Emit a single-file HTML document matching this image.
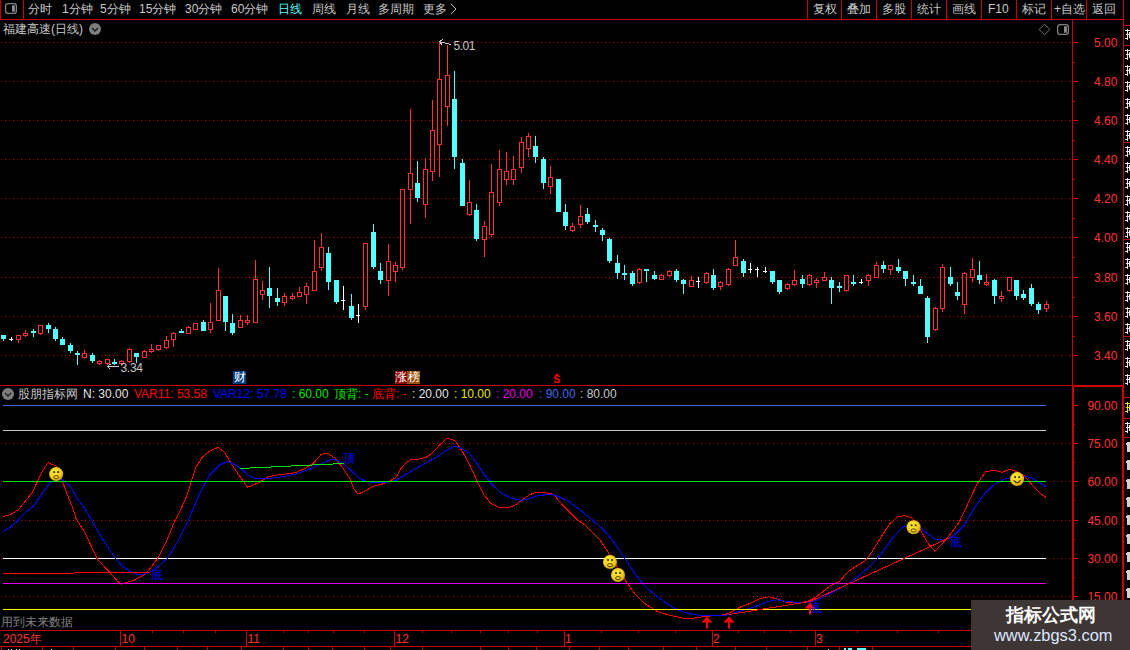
<!DOCTYPE html>
<html><head><meta charset="utf-8"><title>chart</title>
<style>
html,body{margin:0;padding:0;background:#000;}
body{width:1130px;height:650px;overflow:hidden;position:relative;font-family:"Liberation Sans",sans-serif;}
svg{position:absolute;left:0;top:0;}
.t{position:absolute;white-space:nowrap;line-height:14px;height:14px;font-size:12px;}
.m{position:absolute;width:12px;height:13px;line-height:13px;font-size:12px;color:#fff;text-align:center;overflow:hidden;}
#wm{position:absolute;left:971px;top:600px;width:159px;height:50px;background:#3e3535;overflow:hidden;}
#wm .w1{position:absolute;left:35px;top:3px;color:#fff;font-weight:bold;font-size:18px;line-height:24px;white-space:nowrap;}
#wm .w2{position:absolute;left:23px;top:25px;color:#dce6ff;font-size:16.4px;line-height:20px;white-space:nowrap;}
</style></head><body>
<svg width="1130" height="650" viewBox="0 0 1130 650" shape-rendering="crispEdges">
<defs><radialGradient id="sg" cx="0.4" cy="0.35" r="0.7"><stop offset="0" stop-color="#ffe83c"/><stop offset="0.6" stop-color="#f5cd1e"/><stop offset="1" stop-color="#c39614"/></radialGradient></defs>
<line x1="1" y1="42.5" x2="1072" y2="42.5" stroke="#c80000" stroke-width="1" stroke-dasharray="1 3"/>
<line x1="1" y1="81.5" x2="1072" y2="81.5" stroke="#c80000" stroke-width="1" stroke-dasharray="1 3"/>
<line x1="1" y1="120.5" x2="1072" y2="120.5" stroke="#c80000" stroke-width="1" stroke-dasharray="1 3"/>
<line x1="1" y1="159.5" x2="1072" y2="159.5" stroke="#c80000" stroke-width="1" stroke-dasharray="1 3"/>
<line x1="1" y1="198.5" x2="1072" y2="198.5" stroke="#c80000" stroke-width="1" stroke-dasharray="1 3"/>
<line x1="1" y1="237.5" x2="1072" y2="237.5" stroke="#c80000" stroke-width="1" stroke-dasharray="1 3"/>
<line x1="1" y1="277.5" x2="1072" y2="277.5" stroke="#c80000" stroke-width="1" stroke-dasharray="1 3"/>
<line x1="1" y1="316.5" x2="1072" y2="316.5" stroke="#c80000" stroke-width="1" stroke-dasharray="1 3"/>
<line x1="1" y1="355.5" x2="1072" y2="355.5" stroke="#c80000" stroke-width="1" stroke-dasharray="1 3"/>
<line x1="1" y1="443.5" x2="1072" y2="443.5" stroke="#c80000" stroke-width="1" stroke-dasharray="1 3"/>
<line x1="1" y1="481.5" x2="1072" y2="481.5" stroke="#c80000" stroke-width="1" stroke-dasharray="1 3"/>
<line x1="1" y1="520.5" x2="1072" y2="520.5" stroke="#c80000" stroke-width="1" stroke-dasharray="1 3"/>
<line x1="1" y1="558.5" x2="1072" y2="558.5" stroke="#c80000" stroke-width="1" stroke-dasharray="1 3"/>
<line x1="1" y1="596.5" x2="1072" y2="596.5" stroke="#c80000" stroke-width="1" stroke-dasharray="1 3"/>
<rect x="3" y="335" width="1" height="6" fill="#54ffff"/>
<rect x="1" y="335" width="5" height="4" fill="#54ffff"/>
<rect x="11" y="337" width="1" height="4" fill="#ffffff"/>
<rect x="9" y="339" width="4" height="1" fill="#ffffff"/>
<rect x="18" y="340" width="1" height="3" fill="#ff3232"/>
<rect x="16.5" y="335.5" width="4" height="4" fill="none" stroke="#ff3232" stroke-width="1"/>
<rect x="25" y="330" width="1" height="3" fill="#ff3232"/>
<rect x="25" y="336" width="1" height="1" fill="#ff3232"/>
<rect x="23.5" y="333.5" width="4" height="2" fill="none" stroke="#ff3232" stroke-width="1"/>
<rect x="33" y="329" width="1" height="8" fill="#54ffff"/>
<rect x="31" y="331" width="5" height="2" fill="#54ffff"/>
<rect x="40" y="334" width="1" height="1" fill="#ff3232"/>
<rect x="38.5" y="325.5" width="4" height="8" fill="none" stroke="#ff3232" stroke-width="1"/>
<rect x="48" y="323" width="1" height="10" fill="#54ffff"/>
<rect x="46" y="325" width="5" height="4" fill="#54ffff"/>
<rect x="55" y="327" width="1" height="14" fill="#54ffff"/>
<rect x="53" y="329" width="5" height="10" fill="#54ffff"/>
<rect x="62" y="337" width="1" height="8" fill="#54ffff"/>
<rect x="60" y="339" width="5" height="6" fill="#54ffff"/>
<rect x="70" y="343" width="1" height="10" fill="#54ffff"/>
<rect x="68" y="345" width="5" height="6" fill="#54ffff"/>
<rect x="77" y="351" width="1" height="14" fill="#54ffff"/>
<rect x="75" y="353" width="5" height="2" fill="#54ffff"/>
<rect x="84" y="350" width="1" height="3" fill="#ff3232"/>
<rect x="84" y="358" width="1" height="1" fill="#ff3232"/>
<rect x="82.5" y="353.5" width="4" height="4" fill="none" stroke="#ff3232" stroke-width="1"/>
<rect x="92" y="353" width="1" height="10" fill="#54ffff"/>
<rect x="90" y="355" width="5" height="6" fill="#54ffff"/>
<rect x="99" y="360" width="1" height="1" fill="#ff3232"/>
<rect x="99" y="364" width="1" height="1" fill="#ff3232"/>
<rect x="97.5" y="361.5" width="4" height="2" fill="none" stroke="#ff3232" stroke-width="1"/>
<rect x="107" y="364" width="1" height="1" fill="#ff3232"/>
<rect x="105.5" y="359.5" width="4" height="4" fill="none" stroke="#ff3232" stroke-width="1"/>
<rect x="114" y="359" width="1" height="6" fill="#54ffff"/>
<rect x="112" y="362" width="5" height="2" fill="#54ffff"/>
<rect x="121" y="360" width="1" height="1" fill="#ff3232"/>
<rect x="121" y="363" width="1" height="2" fill="#ff3232"/>
<rect x="119.5" y="361.5" width="4" height="2" fill="none" stroke="#ff3232" stroke-width="1"/>
<rect x="129" y="348" width="1" height="1" fill="#ff3232"/>
<rect x="129" y="362" width="1" height="1" fill="#ff3232"/>
<rect x="127.5" y="349.5" width="4" height="12" fill="none" stroke="#ff3232" stroke-width="1"/>
<rect x="136" y="353" width="1" height="10" fill="#54ffff"/>
<rect x="134" y="353" width="5" height="4" fill="#54ffff"/>
<rect x="144" y="350" width="1" height="1" fill="#ff3232"/>
<rect x="142.5" y="351.5" width="4" height="6" fill="none" stroke="#ff3232" stroke-width="1"/>
<rect x="151" y="344" width="1" height="5" fill="#ff3232"/>
<rect x="151" y="352" width="1" height="1" fill="#ff3232"/>
<rect x="149.5" y="349.5" width="4" height="2" fill="none" stroke="#ff3232" stroke-width="1"/>
<rect x="158" y="350" width="1" height="1" fill="#ff3232"/>
<rect x="156.5" y="345.5" width="4" height="4" fill="none" stroke="#ff3232" stroke-width="1"/>
<rect x="166" y="336" width="1" height="4" fill="#ff3232"/>
<rect x="166" y="348" width="1" height="1" fill="#ff3232"/>
<rect x="164.5" y="340.5" width="4" height="7" fill="none" stroke="#ff3232" stroke-width="1"/>
<rect x="173" y="332" width="1" height="1" fill="#ff3232"/>
<rect x="173" y="340" width="1" height="7" fill="#ff3232"/>
<rect x="171.5" y="333.5" width="4" height="6" fill="none" stroke="#ff3232" stroke-width="1"/>
<rect x="181" y="329" width="1" height="4" fill="#54ffff"/>
<rect x="179" y="331" width="5" height="2" fill="#54ffff"/>
<rect x="188" y="326" width="1" height="1" fill="#ff3232"/>
<rect x="186.5" y="327.5" width="4" height="6" fill="none" stroke="#ff3232" stroke-width="1"/>
<rect x="193.5" y="323.5" width="4" height="6" fill="none" stroke="#ff3232" stroke-width="1"/>
<rect x="203" y="320" width="1" height="11" fill="#54ffff"/>
<rect x="201" y="322" width="5" height="9" fill="#54ffff"/>
<rect x="210" y="303" width="1" height="19" fill="#ff3232"/>
<rect x="210" y="330" width="1" height="3" fill="#ff3232"/>
<rect x="208.5" y="322.5" width="4" height="7" fill="none" stroke="#ff3232" stroke-width="1"/>
<rect x="218" y="268" width="1" height="22" fill="#ff3232"/>
<rect x="216.5" y="290.5" width="4" height="30" fill="none" stroke="#ff3232" stroke-width="1"/>
<rect x="225" y="296" width="1" height="35" fill="#54ffff"/>
<rect x="223" y="296" width="5" height="26" fill="#54ffff"/>
<rect x="232" y="314" width="1" height="21" fill="#54ffff"/>
<rect x="230" y="323" width="5" height="10" fill="#54ffff"/>
<rect x="240" y="315" width="1" height="5" fill="#ff3232"/>
<rect x="238.5" y="320.5" width="4" height="7" fill="none" stroke="#ff3232" stroke-width="1"/>
<rect x="247" y="315" width="1" height="5" fill="#ff3232"/>
<rect x="247" y="323" width="1" height="2" fill="#ff3232"/>
<rect x="245.5" y="320.5" width="4" height="2" fill="none" stroke="#ff3232" stroke-width="1"/>
<rect x="255" y="260" width="1" height="19" fill="#ff3232"/>
<rect x="253.5" y="279.5" width="4" height="43" fill="none" stroke="#ff3232" stroke-width="1"/>
<rect x="262" y="281" width="1" height="9" fill="#ff3232"/>
<rect x="262" y="295" width="1" height="5" fill="#ff3232"/>
<rect x="260.5" y="290.5" width="4" height="4" fill="none" stroke="#ff3232" stroke-width="1"/>
<rect x="269" y="267" width="1" height="41" fill="#54ffff"/>
<rect x="267" y="288" width="5" height="8" fill="#54ffff"/>
<rect x="277" y="288" width="1" height="18" fill="#54ffff"/>
<rect x="275" y="298" width="5" height="4" fill="#54ffff"/>
<rect x="284" y="293" width="1" height="3" fill="#ff3232"/>
<rect x="284" y="303" width="1" height="3" fill="#ff3232"/>
<rect x="282.5" y="296.5" width="4" height="6" fill="none" stroke="#ff3232" stroke-width="1"/>
<rect x="292" y="293" width="1" height="3" fill="#ff3232"/>
<rect x="292" y="299" width="1" height="1" fill="#ff3232"/>
<rect x="290.5" y="296.5" width="4" height="2" fill="none" stroke="#ff3232" stroke-width="1"/>
<rect x="299" y="287" width="1" height="5" fill="#ff3232"/>
<rect x="297.5" y="292.5" width="4" height="4" fill="none" stroke="#ff3232" stroke-width="1"/>
<rect x="306" y="283" width="1" height="3" fill="#ff3232"/>
<rect x="306" y="295" width="1" height="9" fill="#ff3232"/>
<rect x="304.5" y="286.5" width="4" height="8" fill="none" stroke="#ff3232" stroke-width="1"/>
<rect x="314" y="240" width="1" height="31" fill="#ff3232"/>
<rect x="312.5" y="271.5" width="4" height="19" fill="none" stroke="#ff3232" stroke-width="1"/>
<rect x="321" y="233" width="1" height="14" fill="#ff3232"/>
<rect x="321" y="268" width="1" height="3" fill="#ff3232"/>
<rect x="319.5" y="247.5" width="4" height="20" fill="none" stroke="#ff3232" stroke-width="1"/>
<rect x="328" y="247" width="1" height="43" fill="#54ffff"/>
<rect x="326" y="253" width="5" height="29" fill="#54ffff"/>
<rect x="336" y="280" width="1" height="24" fill="#54ffff"/>
<rect x="334" y="280" width="5" height="22" fill="#54ffff"/>
<rect x="343" y="286" width="1" height="24" fill="#ffffff"/>
<rect x="341" y="300" width="4" height="1" fill="#ffffff"/>
<rect x="351" y="294" width="1" height="26" fill="#54ffff"/>
<rect x="349" y="306" width="5" height="12" fill="#54ffff"/>
<rect x="358" y="304" width="1" height="19" fill="#ffffff"/>
<rect x="356" y="315" width="4" height="1" fill="#ffffff"/>
<rect x="365" y="307" width="1" height="3" fill="#ff3232"/>
<rect x="363.5" y="243.5" width="4" height="63" fill="none" stroke="#ff3232" stroke-width="1"/>
<rect x="373" y="224" width="1" height="45" fill="#54ffff"/>
<rect x="371" y="232" width="5" height="35" fill="#54ffff"/>
<rect x="380" y="263" width="1" height="21" fill="#54ffff"/>
<rect x="378" y="271" width="5" height="9" fill="#54ffff"/>
<rect x="388" y="244" width="1" height="17" fill="#ff3232"/>
<rect x="388" y="281" width="1" height="15" fill="#ff3232"/>
<rect x="386.5" y="261.5" width="4" height="19" fill="none" stroke="#ff3232" stroke-width="1"/>
<rect x="395" y="262" width="1" height="3" fill="#ff3232"/>
<rect x="395" y="272" width="1" height="10" fill="#ff3232"/>
<rect x="393.5" y="265.5" width="4" height="6" fill="none" stroke="#ff3232" stroke-width="1"/>
<rect x="402" y="268" width="1" height="2" fill="#ff3232"/>
<rect x="400.5" y="189.5" width="4" height="78" fill="none" stroke="#ff3232" stroke-width="1"/>
<rect x="410" y="109" width="1" height="64" fill="#ff3232"/>
<rect x="410" y="190" width="1" height="34" fill="#ff3232"/>
<rect x="408.5" y="173.5" width="4" height="16" fill="none" stroke="#ff3232" stroke-width="1"/>
<rect x="417" y="161" width="1" height="41" fill="#54ffff"/>
<rect x="415" y="183" width="5" height="15" fill="#54ffff"/>
<rect x="425" y="158" width="1" height="11" fill="#ff3232"/>
<rect x="425" y="205" width="1" height="13" fill="#ff3232"/>
<rect x="423.5" y="169.5" width="4" height="35" fill="none" stroke="#ff3232" stroke-width="1"/>
<rect x="432" y="100" width="1" height="30" fill="#ff3232"/>
<rect x="432" y="172" width="1" height="9" fill="#ff3232"/>
<rect x="430.5" y="130.5" width="4" height="41" fill="none" stroke="#ff3232" stroke-width="1"/>
<rect x="439" y="42" width="1" height="37" fill="#ff3232"/>
<rect x="439" y="145" width="1" height="32" fill="#ff3232"/>
<rect x="437.5" y="79.5" width="4" height="65" fill="none" stroke="#ff3232" stroke-width="1"/>
<rect x="447" y="45" width="1" height="30" fill="#ff3232"/>
<rect x="447" y="107" width="1" height="19" fill="#ff3232"/>
<rect x="445.5" y="75.5" width="4" height="31" fill="none" stroke="#ff3232" stroke-width="1"/>
<rect x="454" y="71" width="1" height="98" fill="#54ffff"/>
<rect x="452" y="99" width="5" height="58" fill="#54ffff"/>
<rect x="462" y="159" width="1" height="47" fill="#54ffff"/>
<rect x="460" y="163" width="5" height="43" fill="#54ffff"/>
<rect x="469" y="180" width="1" height="22" fill="#ff3232"/>
<rect x="469" y="215" width="1" height="1" fill="#ff3232"/>
<rect x="467.5" y="202.5" width="4" height="12" fill="none" stroke="#ff3232" stroke-width="1"/>
<rect x="476" y="204" width="1" height="37" fill="#54ffff"/>
<rect x="474" y="210" width="5" height="29" fill="#54ffff"/>
<rect x="484" y="221" width="1" height="5" fill="#ff3232"/>
<rect x="484" y="240" width="1" height="17" fill="#ff3232"/>
<rect x="482.5" y="226.5" width="4" height="13" fill="none" stroke="#ff3232" stroke-width="1"/>
<rect x="491" y="164" width="1" height="28" fill="#ff3232"/>
<rect x="491" y="235" width="1" height="2" fill="#ff3232"/>
<rect x="489.5" y="192.5" width="4" height="42" fill="none" stroke="#ff3232" stroke-width="1"/>
<rect x="499" y="150" width="1" height="19" fill="#ff3232"/>
<rect x="499" y="203" width="1" height="3" fill="#ff3232"/>
<rect x="497.5" y="169.5" width="4" height="33" fill="none" stroke="#ff3232" stroke-width="1"/>
<rect x="506" y="152" width="1" height="19" fill="#ff3232"/>
<rect x="506" y="180" width="1" height="5" fill="#ff3232"/>
<rect x="504.5" y="171.5" width="4" height="8" fill="none" stroke="#ff3232" stroke-width="1"/>
<rect x="513" y="156" width="1" height="13" fill="#ff3232"/>
<rect x="513" y="180" width="1" height="5" fill="#ff3232"/>
<rect x="511.5" y="169.5" width="4" height="10" fill="none" stroke="#ff3232" stroke-width="1"/>
<rect x="521" y="137" width="1" height="5" fill="#ff3232"/>
<rect x="521" y="168" width="1" height="5" fill="#ff3232"/>
<rect x="519.5" y="142.5" width="4" height="25" fill="none" stroke="#ff3232" stroke-width="1"/>
<rect x="528" y="133" width="1" height="3" fill="#ff3232"/>
<rect x="528" y="149" width="1" height="8" fill="#ff3232"/>
<rect x="526.5" y="136.5" width="4" height="12" fill="none" stroke="#ff3232" stroke-width="1"/>
<rect x="535" y="136" width="1" height="27" fill="#54ffff"/>
<rect x="533" y="146" width="5" height="11" fill="#54ffff"/>
<rect x="543" y="157" width="1" height="32" fill="#54ffff"/>
<rect x="541" y="159" width="5" height="24" fill="#54ffff"/>
<rect x="550" y="166" width="1" height="11" fill="#ff3232"/>
<rect x="550" y="187" width="1" height="7" fill="#ff3232"/>
<rect x="548.5" y="177.5" width="4" height="9" fill="none" stroke="#ff3232" stroke-width="1"/>
<rect x="558" y="179" width="1" height="33" fill="#54ffff"/>
<rect x="556" y="179" width="5" height="33" fill="#54ffff"/>
<rect x="565" y="204" width="1" height="26" fill="#54ffff"/>
<rect x="563" y="212" width="5" height="14" fill="#54ffff"/>
<rect x="572" y="223" width="1" height="3" fill="#ff3232"/>
<rect x="572" y="231" width="1" height="1" fill="#ff3232"/>
<rect x="570.5" y="226.5" width="4" height="4" fill="none" stroke="#ff3232" stroke-width="1"/>
<rect x="580" y="205" width="1" height="11" fill="#ff3232"/>
<rect x="580" y="225" width="1" height="3" fill="#ff3232"/>
<rect x="578.5" y="216.5" width="4" height="8" fill="none" stroke="#ff3232" stroke-width="1"/>
<rect x="587" y="208" width="1" height="16" fill="#54ffff"/>
<rect x="585" y="214" width="5" height="8" fill="#54ffff"/>
<rect x="595" y="220" width="1" height="12" fill="#54ffff"/>
<rect x="593" y="225" width="5" height="2" fill="#54ffff"/>
<rect x="602" y="228" width="1" height="13" fill="#54ffff"/>
<rect x="600" y="230" width="5" height="5" fill="#54ffff"/>
<rect x="609" y="238" width="1" height="25" fill="#54ffff"/>
<rect x="607" y="239" width="5" height="22" fill="#54ffff"/>
<rect x="617" y="255" width="1" height="24" fill="#54ffff"/>
<rect x="615" y="263" width="5" height="10" fill="#54ffff"/>
<rect x="624" y="265" width="1" height="15" fill="#54ffff"/>
<rect x="622" y="273" width="5" height="2" fill="#54ffff"/>
<rect x="632" y="271" width="1" height="15" fill="#54ffff"/>
<rect x="630" y="273" width="5" height="11" fill="#54ffff"/>
<rect x="639" y="268" width="1" height="1" fill="#ff3232"/>
<rect x="639" y="283" width="1" height="1" fill="#ff3232"/>
<rect x="637.5" y="269.5" width="4" height="13" fill="none" stroke="#ff3232" stroke-width="1"/>
<rect x="646" y="269" width="1" height="13" fill="#54ffff"/>
<rect x="644" y="269" width="5" height="2" fill="#54ffff"/>
<rect x="654" y="271" width="1" height="9" fill="#54ffff"/>
<rect x="652" y="275" width="5" height="4" fill="#54ffff"/>
<rect x="661" y="274" width="1" height="1" fill="#ff3232"/>
<rect x="659.5" y="275.5" width="4" height="4" fill="none" stroke="#ff3232" stroke-width="1"/>
<rect x="669" y="270" width="1" height="1" fill="#ff3232"/>
<rect x="669" y="276" width="1" height="1" fill="#ff3232"/>
<rect x="667.5" y="271.5" width="4" height="4" fill="none" stroke="#ff3232" stroke-width="1"/>
<rect x="676" y="269" width="1" height="13" fill="#54ffff"/>
<rect x="674" y="271" width="5" height="9" fill="#54ffff"/>
<rect x="683" y="279" width="1" height="15" fill="#54ffff"/>
<rect x="681" y="280" width="5" height="4" fill="#54ffff"/>
<rect x="691" y="276" width="1" height="4" fill="#ff3232"/>
<rect x="689.5" y="280.5" width="4" height="6" fill="none" stroke="#ff3232" stroke-width="1"/>
<rect x="698" y="277" width="1" height="11" fill="#ffffff"/>
<rect x="696" y="281" width="4" height="1" fill="#ffffff"/>
<rect x="706" y="272" width="1" height="1" fill="#ff3232"/>
<rect x="706" y="283" width="1" height="1" fill="#ff3232"/>
<rect x="704.5" y="273.5" width="4" height="9" fill="none" stroke="#ff3232" stroke-width="1"/>
<rect x="713" y="269" width="1" height="21" fill="#54ffff"/>
<rect x="711" y="275" width="5" height="13" fill="#54ffff"/>
<rect x="720" y="281" width="1" height="1" fill="#ff3232"/>
<rect x="720" y="287" width="1" height="3" fill="#ff3232"/>
<rect x="718.5" y="282.5" width="4" height="4" fill="none" stroke="#ff3232" stroke-width="1"/>
<rect x="728" y="268" width="1" height="1" fill="#ff3232"/>
<rect x="728" y="285" width="1" height="1" fill="#ff3232"/>
<rect x="726.5" y="269.5" width="4" height="15" fill="none" stroke="#ff3232" stroke-width="1"/>
<rect x="735" y="240" width="1" height="17" fill="#ff3232"/>
<rect x="733.5" y="257.5" width="4" height="8" fill="none" stroke="#ff3232" stroke-width="1"/>
<rect x="743" y="259" width="1" height="18" fill="#54ffff"/>
<rect x="741" y="261" width="5" height="12" fill="#54ffff"/>
<rect x="750" y="263" width="1" height="10" fill="#ffffff"/>
<rect x="748" y="269" width="4" height="1" fill="#ffffff"/>
<rect x="757" y="267" width="1" height="10" fill="#ffffff"/>
<rect x="755" y="269" width="4" height="1" fill="#ffffff"/>
<rect x="765" y="267" width="1" height="6" fill="#ffffff"/>
<rect x="763" y="271" width="4" height="1" fill="#ffffff"/>
<rect x="772" y="271" width="1" height="13" fill="#54ffff"/>
<rect x="770" y="271" width="5" height="11" fill="#54ffff"/>
<rect x="779" y="280" width="1" height="14" fill="#54ffff"/>
<rect x="777" y="280" width="5" height="12" fill="#54ffff"/>
<rect x="787" y="283" width="1" height="1" fill="#ff3232"/>
<rect x="787" y="289" width="1" height="1" fill="#ff3232"/>
<rect x="785.5" y="284.5" width="4" height="4" fill="none" stroke="#ff3232" stroke-width="1"/>
<rect x="794" y="270" width="1" height="10" fill="#ff3232"/>
<rect x="794" y="285" width="1" height="1" fill="#ff3232"/>
<rect x="792.5" y="280.5" width="4" height="4" fill="none" stroke="#ff3232" stroke-width="1"/>
<rect x="802" y="275" width="1" height="13" fill="#54ffff"/>
<rect x="800" y="279" width="5" height="5" fill="#54ffff"/>
<rect x="809" y="274" width="1" height="1" fill="#ff3232"/>
<rect x="809" y="285" width="1" height="1" fill="#ff3232"/>
<rect x="807.5" y="275.5" width="4" height="9" fill="none" stroke="#ff3232" stroke-width="1"/>
<rect x="816" y="278" width="1" height="2" fill="#ff3232"/>
<rect x="816" y="283" width="1" height="5" fill="#ff3232"/>
<rect x="814.5" y="280.5" width="4" height="2" fill="none" stroke="#ff3232" stroke-width="1"/>
<rect x="824" y="272" width="1" height="5" fill="#ff3232"/>
<rect x="822.5" y="277.5" width="4" height="3" fill="none" stroke="#ff3232" stroke-width="1"/>
<rect x="831" y="277" width="1" height="27" fill="#54ffff"/>
<rect x="829" y="280" width="5" height="8" fill="#54ffff"/>
<rect x="839" y="282" width="1" height="10" fill="#54ffff"/>
<rect x="837" y="286" width="5" height="2" fill="#54ffff"/>
<rect x="846" y="291" width="1" height="1" fill="#ff3232"/>
<rect x="844.5" y="275.5" width="4" height="15" fill="none" stroke="#ff3232" stroke-width="1"/>
<rect x="853" y="275" width="1" height="11" fill="#54ffff"/>
<rect x="851" y="282" width="5" height="2" fill="#54ffff"/>
<rect x="861" y="279" width="1" height="5" fill="#ffffff"/>
<rect x="859" y="282" width="4" height="1" fill="#ffffff"/>
<rect x="868" y="274" width="1" height="1" fill="#ff3232"/>
<rect x="868" y="281" width="1" height="5" fill="#ff3232"/>
<rect x="866.5" y="275.5" width="4" height="5" fill="none" stroke="#ff3232" stroke-width="1"/>
<rect x="876" y="262" width="1" height="3" fill="#ff3232"/>
<rect x="874.5" y="265.5" width="4" height="12" fill="none" stroke="#ff3232" stroke-width="1"/>
<rect x="883" y="261" width="1" height="12" fill="#54ffff"/>
<rect x="881" y="265" width="5" height="4" fill="#54ffff"/>
<rect x="890" y="270" width="1" height="5" fill="#ff3232"/>
<rect x="888.5" y="265.5" width="4" height="4" fill="none" stroke="#ff3232" stroke-width="1"/>
<rect x="898" y="259" width="1" height="14" fill="#54ffff"/>
<rect x="896" y="267" width="5" height="4" fill="#54ffff"/>
<rect x="905" y="271" width="1" height="15" fill="#54ffff"/>
<rect x="903" y="271" width="5" height="8" fill="#54ffff"/>
<rect x="913" y="275" width="1" height="11" fill="#54ffff"/>
<rect x="911" y="282" width="5" height="2" fill="#54ffff"/>
<rect x="920" y="279" width="1" height="15" fill="#54ffff"/>
<rect x="918" y="286" width="5" height="8" fill="#54ffff"/>
<rect x="927" y="296" width="1" height="47" fill="#54ffff"/>
<rect x="925" y="298" width="5" height="39" fill="#54ffff"/>
<rect x="935" y="307" width="1" height="1" fill="#ff3232"/>
<rect x="935" y="330" width="1" height="1" fill="#ff3232"/>
<rect x="933.5" y="308.5" width="4" height="21" fill="none" stroke="#ff3232" stroke-width="1"/>
<rect x="942" y="264" width="1" height="3" fill="#ff3232"/>
<rect x="942" y="309" width="1" height="3" fill="#ff3232"/>
<rect x="940.5" y="267.5" width="4" height="41" fill="none" stroke="#ff3232" stroke-width="1"/>
<rect x="950" y="267" width="1" height="19" fill="#54ffff"/>
<rect x="948" y="277" width="5" height="7" fill="#54ffff"/>
<rect x="957" y="282" width="1" height="18" fill="#54ffff"/>
<rect x="955" y="292" width="5" height="4" fill="#54ffff"/>
<rect x="964" y="272" width="1" height="1" fill="#ff3232"/>
<rect x="964" y="305" width="1" height="9" fill="#ff3232"/>
<rect x="962.5" y="273.5" width="4" height="31" fill="none" stroke="#ff3232" stroke-width="1"/>
<rect x="972" y="258" width="1" height="11" fill="#ff3232"/>
<rect x="972" y="278" width="1" height="4" fill="#ff3232"/>
<rect x="970.5" y="269.5" width="4" height="8" fill="none" stroke="#ff3232" stroke-width="1"/>
<rect x="979" y="261" width="1" height="23" fill="#54ffff"/>
<rect x="977" y="275" width="5" height="5" fill="#54ffff"/>
<rect x="986" y="274" width="1" height="8" fill="#ff3232"/>
<rect x="986" y="285" width="1" height="1" fill="#ff3232"/>
<rect x="984.5" y="282.5" width="4" height="2" fill="none" stroke="#ff3232" stroke-width="1"/>
<rect x="994" y="279" width="1" height="25" fill="#54ffff"/>
<rect x="992" y="280" width="5" height="16" fill="#54ffff"/>
<rect x="1001" y="291" width="1" height="5" fill="#ff3232"/>
<rect x="1001" y="299" width="1" height="3" fill="#ff3232"/>
<rect x="999.5" y="296.5" width="4" height="2" fill="none" stroke="#ff3232" stroke-width="1"/>
<rect x="1009" y="291" width="1" height="1" fill="#ff3232"/>
<rect x="1007.5" y="277.5" width="4" height="13" fill="none" stroke="#ff3232" stroke-width="1"/>
<rect x="1016" y="280" width="1" height="20" fill="#54ffff"/>
<rect x="1014" y="280" width="5" height="16" fill="#54ffff"/>
<rect x="1023" y="290" width="1" height="10" fill="#54ffff"/>
<rect x="1021" y="294" width="5" height="4" fill="#54ffff"/>
<rect x="1031" y="284" width="1" height="22" fill="#54ffff"/>
<rect x="1029" y="288" width="5" height="16" fill="#54ffff"/>
<rect x="1038" y="302" width="1" height="12" fill="#54ffff"/>
<rect x="1036" y="304" width="5" height="6" fill="#54ffff"/>
<rect x="1046" y="301" width="1" height="3" fill="#ff3232"/>
<rect x="1046" y="309" width="1" height="3" fill="#ff3232"/>
<rect x="1044.5" y="304.5" width="4" height="4" fill="none" stroke="#ff3232" stroke-width="1"/>
<rect x="3" y="558" width="1043" height="1" fill="#ffffff"/>
<polyline points="3,516.5 11.2,514.3 18.7,509.5 25,501.5 32.4,492.3 37.4,481.6 42.4,471.1 48.2,462.6 56.2,466.1 62.4,481.1 67.4,494.8 72.4,507.3 76.1,518.7 84.9,532.4 97.3,559.1 109.8,572.4 117.3,581.1 121.5,584.1 134.8,579.9 146,573.6 157.2,559.1 166,542.4 174.7,521.2 180.9,509 187.2,494.8 192.2,478.6 195.9,467.4 202.1,457.4 209.6,451.1 217.9,447.4 224.6,452.4 232.1,464.9 239.6,476.1 247.6,487.3 259.5,482.3 268.3,476.8 274.5,475.3 282.5,474.3 295,472.8 304.9,468.6 313.7,462.9 321.2,454.4 327.4,453.1 334.9,458.1 342.4,467.4 349.9,478.6 353.6,488.6 358.1,494.1 364.8,491.1 373.6,486.1 382.3,484.1 389.8,481.1 396,477.3 401,468.6 406,462.9 411,459.4 418.5,459.1 426,457.4 432.2,453.1 439.7,444.9 447.2,438.2 454.7,440.4 462.2,451.1 469.7,464.9 477.1,481.1 483.4,494.1 490.9,503.5 498.4,507.3 509.6,507.3 515.8,504.8 522.1,499.8 529.5,494.8 535.8,492.3 544.5,492.3 552,494.1 555,496.1 561.2,503.5 568.7,511 577.4,519.8 584.9,525 599.9,539.9 607.4,551.2 614.9,563.6 624.9,579.9 634.8,593.6 644.8,603.6 657.3,611.6 669.8,615.3 682.2,618 694.7,618 704.7,616.5 714.7,615.5 724.7,614.8 732.2,611.6 739.7,607.3 749.6,603.6 759.6,598.6 769.6,596.8 777.1,599.1 787.1,602.3 797.1,603.1 807,601.6 814.5,598.1 822,592.3 830,586.1 839.9,581.1 847.4,572.4 854.9,566.9 864.9,561.1 872.4,551.2 882.4,534.9 889.9,523.7 897.3,517 904.3,515.5 912.3,518 919.8,528.7 927.3,542.4 934.8,551.2 942.3,543.7 949.8,534.9 959.7,521.2 968.5,502.3 977.2,483.6 985.9,471.6 994.7,470.4 1002.2,472.3 1009.7,469.4 1017.1,471.6 1024.6,476.1 1032.1,484.8 1039.6,492.8 1045.8,497.3" fill="none" stroke="#ff0000" stroke-width="1" stroke-linejoin="round"/>
<polyline points="3,531.6 10,527.3 17.5,521.1 25,512.8 33.7,506 41.2,494.8 49.9,482.8 56.2,479.8 62.4,479.8 71.1,487.3 77.4,498.6 86.1,510.5 94.8,526 104.8,542.4 114.8,557.4 122.3,566.1 129.8,571.1 136,574.1 143.5,574.1 149.7,572.4 157.2,567.4 167.2,558.6 177.2,542.4 187.2,522.5 192.2,511 199.7,493.6 209.6,474.8 219.6,464.9 226.6,461.6 234.6,464.4 240.8,468.6 248.3,475.3 254.6,478.1 264.5,478.6 274.5,477.8 282.5,476.6 295,474.3 307.4,469.9 319.9,464.4 329.9,459.9 336.1,459.9 344.9,464.9 352.4,471.8 359.8,478.6 369.8,482.3 379.8,482.8 389.8,481.8 397.3,479.8 404.8,474.8 414.7,469.1 424.7,463.6 437.2,456.9 447.2,449.9 454.7,446.1 462.2,448.6 469.7,453.6 477.1,463.6 484.6,474.8 492.1,484.8 502.1,493.6 512.1,498.6 522.1,500.3 529.5,498.6 538.3,495.6 547,494.6 550,494.3 558.7,496.6 568.7,501.5 579.9,509.8 592.4,520 604.9,531.2 614.9,543.7 624.9,558.6 634.8,573.6 644.8,586.1 654.8,594.8 664.8,602.3 674.8,608.6 684.7,612.3 694.7,614.8 704.7,615.5 714.7,615.5 724.7,615.5 732.2,613.6 739.7,611.1 749.6,608.6 759.6,604.8 769.6,601.1 777.1,599.8 787.1,601.6 797.1,602.3 807,602.3 814.5,601 820,598.6 830,593.6 839.9,588.6 849.9,582.4 859.9,574.9 869.9,566.1 877.4,558.6 884.9,548.7 894.9,534.9 902.3,527.5 909.8,524.5 919.8,527.4 927.3,533.6 934.8,538.9 942.3,540.1 949.8,538.3 954.7,534.7 964.7,524.8 974.7,507.3 984.7,493.6 994.7,484.1 1004.7,479.1 1014.6,476.6 1024.6,476.1 1032.1,478.1 1039.6,482.8 1045.8,486.8" fill="none" stroke="#0000ff" stroke-width="1" stroke-linejoin="round"/>
<rect x="3" y="405" width="1043" height="1" fill="#4169e1"/>
<rect x="3" y="430" width="1043" height="1" fill="#c8c8c8"/>
<rect x="3" y="481" width="1043" height="1" fill="#00e600"/>
<rect x="3" y="583" width="1043" height="1" fill="#e600e6"/>
<rect x="3" y="609" width="1043" height="1" fill="#ffff00"/>
<rect x="3" y="573" width="71" height="1" fill="#ff0000"/>
<rect x="74" y="572" width="76" height="1" fill="#ff0000"/>
<rect x="240" y="468" width="10" height="1" fill="#00e600"/>
<rect x="250" y="467" width="21" height="1" fill="#00e600"/>
<rect x="271" y="466" width="20" height="1" fill="#00e600"/>
<rect x="291" y="465" width="21" height="1" fill="#00e600"/>
<rect x="312" y="464" width="21" height="1" fill="#00e600"/>
<rect x="333" y="463" width="11" height="1" fill="#00e600"/>
<polyline points="729,614.5 810,601.5 950,537.5" fill="none" stroke="#ff0000" stroke-width="1" stroke-linejoin="round"/>
<rect x="0" y="19" width="1124" height="1" fill="#c80000"/>
<rect x="0" y="0" width="1" height="20" fill="#c80000"/>
<rect x="23" y="0" width="1" height="20" fill="#c80000"/>
<rect x="807" y="0" width="1" height="20" fill="#c80000"/>
<rect x="841" y="0" width="1" height="20" fill="#c80000"/>
<rect x="876" y="0" width="1" height="20" fill="#c80000"/>
<rect x="911" y="0" width="1" height="20" fill="#c80000"/>
<rect x="946" y="0" width="1" height="20" fill="#c80000"/>
<rect x="981" y="0" width="1" height="20" fill="#c80000"/>
<rect x="1016" y="0" width="1" height="20" fill="#c80000"/>
<rect x="1051" y="0" width="1" height="20" fill="#c80000"/>
<rect x="1086" y="0" width="1" height="20" fill="#c80000"/>
<rect x="1123" y="0" width="1" height="386" fill="#c80000"/>
<rect x="1122" y="386" width="2" height="264" fill="#c80000"/>
<rect x="1072" y="20" width="1" height="366" fill="#c80000"/>
<rect x="1072" y="386" width="2" height="245" fill="#c80000"/>
<rect x="0" y="385" width="1124" height="1" fill="#c80000"/>
<rect x="1073" y="386" width="51" height="1" fill="#c80000"/>
<rect x="0" y="630" width="1124" height="1" fill="#c80000"/>
<rect x="0" y="646" width="1124" height="1" fill="#c80000"/>
<rect x="1072" y="42" width="6" height="1" fill="#c80000"/>
<rect x="1072" y="62" width="3" height="1" fill="#c80000"/>
<rect x="1072" y="81" width="6" height="1" fill="#c80000"/>
<rect x="1072" y="101" width="3" height="1" fill="#c80000"/>
<rect x="1072" y="120" width="6" height="1" fill="#c80000"/>
<rect x="1072" y="140" width="3" height="1" fill="#c80000"/>
<rect x="1072" y="159" width="6" height="1" fill="#c80000"/>
<rect x="1072" y="179" width="3" height="1" fill="#c80000"/>
<rect x="1072" y="198" width="6" height="1" fill="#c80000"/>
<rect x="1072" y="218" width="3" height="1" fill="#c80000"/>
<rect x="1072" y="237" width="6" height="1" fill="#c80000"/>
<rect x="1072" y="257" width="3" height="1" fill="#c80000"/>
<rect x="1072" y="277" width="6" height="1" fill="#c80000"/>
<rect x="1072" y="297" width="3" height="1" fill="#c80000"/>
<rect x="1072" y="316" width="6" height="1" fill="#c80000"/>
<rect x="1072" y="336" width="3" height="1" fill="#c80000"/>
<rect x="1072" y="355" width="6" height="1" fill="#c80000"/>
<rect x="1072" y="405" width="6" height="1" fill="#c80000"/>
<rect x="1072" y="443" width="6" height="1" fill="#c80000"/>
<rect x="1072" y="481" width="6" height="1" fill="#c80000"/>
<rect x="1072" y="520" width="6" height="1" fill="#c80000"/>
<rect x="1072" y="558" width="6" height="1" fill="#c80000"/>
<rect x="1072" y="596" width="6" height="1" fill="#c80000"/>
<rect x="1072" y="424" width="3" height="1" fill="#c80000"/>
<rect x="1072" y="462" width="3" height="1" fill="#c80000"/>
<rect x="1072" y="500" width="3" height="1" fill="#c80000"/>
<rect x="1072" y="539" width="3" height="1" fill="#c80000"/>
<rect x="1072" y="577" width="3" height="1" fill="#c80000"/>
<rect x="1072" y="615" width="3" height="1" fill="#c80000"/>
<rect x="120" y="630" width="1" height="16" fill="#c80000"/>
<rect x="246" y="630" width="1" height="16" fill="#c80000"/>
<rect x="394" y="630" width="1" height="16" fill="#c80000"/>
<rect x="564" y="630" width="1" height="16" fill="#c80000"/>
<rect x="712" y="630" width="1" height="16" fill="#c80000"/>
<rect x="815" y="630" width="1" height="16" fill="#c80000"/>
<rect x="152" y="631" width="1" height="2" fill="#c80000"/>
<rect x="183" y="631" width="1" height="2" fill="#c80000"/>
<rect x="215" y="631" width="1" height="2" fill="#c80000"/>
<rect x="283" y="631" width="1" height="2" fill="#c80000"/>
<rect x="308" y="631" width="1" height="2" fill="#c80000"/>
<rect x="333" y="631" width="1" height="2" fill="#c80000"/>
<rect x="364" y="631" width="1" height="2" fill="#c80000"/>
<rect x="422" y="631" width="1" height="2" fill="#c80000"/>
<rect x="451" y="631" width="1" height="2" fill="#c80000"/>
<rect x="480" y="631" width="1" height="2" fill="#c80000"/>
<rect x="508" y="631" width="1" height="2" fill="#c80000"/>
<rect x="537" y="631" width="1" height="2" fill="#c80000"/>
<rect x="601" y="631" width="1" height="2" fill="#c80000"/>
<rect x="638" y="631" width="1" height="2" fill="#c80000"/>
<rect x="675" y="631" width="1" height="2" fill="#c80000"/>
<rect x="738" y="631" width="1" height="2" fill="#c80000"/>
<rect x="764" y="631" width="1" height="2" fill="#c80000"/>
<rect x="790" y="631" width="1" height="2" fill="#c80000"/>
<rect x="857" y="631" width="1" height="2" fill="#c80000"/>
<rect x="897" y="631" width="1" height="2" fill="#c80000"/>
<rect x="938" y="631" width="1" height="2" fill="#c80000"/>
<rect x="1" y="646" width="1" height="4" fill="#c80000"/>
<rect x="42" y="646" width="1" height="4" fill="#c80000"/>
<rect x="73" y="646" width="1" height="4" fill="#c80000"/>
<rect x="115" y="646" width="1" height="4" fill="#c80000"/>
<rect x="144" y="646" width="1" height="4" fill="#c80000"/>
<rect x="177" y="646" width="1" height="4" fill="#c80000"/>
<rect x="207" y="646" width="1" height="4" fill="#c80000"/>
<rect x="241" y="646" width="1" height="4" fill="#c80000"/>
<rect x="283" y="646" width="1" height="4" fill="#c80000"/>
<rect x="308" y="646" width="1" height="4" fill="#c80000"/>
<rect x="332" y="646" width="1" height="4" fill="#c80000"/>
<rect x="364" y="646" width="1" height="4" fill="#c80000"/>
<rect x="390" y="646" width="1" height="4" fill="#c80000"/>
<rect x="422" y="646" width="1" height="4" fill="#c80000"/>
<rect x="480" y="646" width="1" height="4" fill="#c80000"/>
<rect x="508" y="646" width="1" height="4" fill="#c80000"/>
<rect x="536" y="646" width="1" height="4" fill="#c80000"/>
<rect x="569" y="646" width="1" height="4" fill="#c80000"/>
<rect x="599" y="646" width="1" height="4" fill="#c80000"/>
<rect x="628" y="646" width="1" height="4" fill="#c80000"/>
<rect x="663" y="646" width="1" height="4" fill="#c80000"/>
<rect x="696" y="646" width="1" height="4" fill="#c80000"/>
<rect x="735" y="646" width="1" height="4" fill="#c80000"/>
<rect x="766" y="646" width="1" height="4" fill="#c80000"/>
<rect x="807" y="646" width="1" height="4" fill="#c80000"/>
<rect x="839" y="646" width="1" height="4" fill="#c80000"/>
<rect x="872" y="646" width="1" height="4" fill="#c80000"/>
<rect x="1123" y="25" width="7" height="1" fill="#c80000"/>
<rect x="1123" y="45" width="7" height="1" fill="#c80000"/>
<rect x="1123" y="142" width="7" height="1" fill="#c80000"/>
<rect x="1123" y="239" width="7" height="1" fill="#c80000"/>
<rect x="1123" y="336" width="7" height="1" fill="#c80000"/>
<rect x="1123" y="397" width="7" height="1" fill="#c80000"/>
<rect x="1123" y="418" width="7" height="1" fill="#c80000"/>
<rect x="1123" y="437" width="7" height="1" fill="#c80000"/>
<path d="M557,373 L559.3,376 L554.7,376 Z" fill="#ff0000" shape-rendering="geometricPrecision"/>
<path d="M707,616.5 L712.5,622.5 L708,622.5 L708,628.5 L706,628.5 L706,622.5 L701.5,622.5 Z" fill="#ff0000" shape-rendering="geometricPrecision"/>
<path d="M729,616.5 L734.5,622.5 L730,622.5 L730,628.5 L728,628.5 L728,622.5 L723.5,622.5 Z" fill="#ff0000" shape-rendering="geometricPrecision"/>
<path d="M810,602.5 L815.5,608.5 L811,608.5 L811,614.5 L809,614.5 L809,608.5 L804.5,608.5 Z" fill="#ff0000" shape-rendering="geometricPrecision"/>
<g shape-rendering="geometricPrecision">
<circle cx="56.2" cy="474.1" r="7" fill="url(#sg)"/>
<rect x="53.300000000000004" y="471.20000000000005" width="1.8" height="1.8" fill="#3c3200"/><rect x="57.300000000000004" y="471.20000000000005" width="1.8" height="1.8" fill="#3c3200"/>
<ellipse cx="56.2" cy="477.20000000000005" rx="2.6" ry="1.5" fill="#f5d228" stroke="#4a3c00" stroke-width="0.9"/>
</g>
<g shape-rendering="geometricPrecision">
<circle cx="610" cy="562" r="7" fill="url(#sg)"/>
<rect x="607.1" y="559.1" width="1.8" height="1.8" fill="#3c3200"/><rect x="611.1" y="559.1" width="1.8" height="1.8" fill="#3c3200"/>
<ellipse cx="610" cy="565.1" rx="2.6" ry="1.5" fill="#f5d228" stroke="#4a3c00" stroke-width="0.9"/>
</g>
<g shape-rendering="geometricPrecision">
<circle cx="618" cy="575" r="7" fill="url(#sg)"/>
<rect x="615.1" y="572.1" width="1.8" height="1.8" fill="#3c3200"/><rect x="619.1" y="572.1" width="1.8" height="1.8" fill="#3c3200"/>
<ellipse cx="618" cy="578.1" rx="2.6" ry="1.5" fill="#f5d228" stroke="#4a3c00" stroke-width="0.9"/>
</g>
<g shape-rendering="geometricPrecision">
<circle cx="913.6" cy="527.3" r="7" fill="url(#sg)"/>
<rect x="910.7" y="524.4" width="1.8" height="1.8" fill="#3c3200"/><rect x="914.7" y="524.4" width="1.8" height="1.8" fill="#3c3200"/>
<ellipse cx="913.6" cy="530.4" rx="2.6" ry="1.5" fill="#f5d228" stroke="#4a3c00" stroke-width="0.9"/>
</g>
<g shape-rendering="geometricPrecision">
<circle cx="1017.1" cy="479.1" r="7" fill="url(#sg)"/>
<rect x="1014.2" y="476.20000000000005" width="1.8" height="1.8" fill="#3c3200"/><rect x="1018.2" y="476.20000000000005" width="1.8" height="1.8" fill="#3c3200"/>
<path d="M1013.7,480.1 Q1017.1,485.3 1020.5,480.1" fill="none" stroke="#3c3200" stroke-width="1.1"/>
</g>
<path d="M439.5,41.5 L451,44.5 M439.5,41.5 L443,39.5 M439.5,41.5 L442,45" stroke="#c8c8c8" stroke-width="1" fill="none"/>
<path d="M107.5,366.5 L119,366.5 M107.5,366.5 L110.5,364 M107.5,366.5 L110.5,369.5" stroke="#c8c8c8" stroke-width="1" fill="none"/>
<g shape-rendering="geometricPrecision"><rect x="5.6" y="3.6" width="10.8" height="9.8" rx="2.4" fill="none" stroke="#828282" stroke-width="1.3"/><rect x="12" y="5.3" width="2.9" height="6.4" fill="#8c8c8c"/></g>
<g shape-rendering="geometricPrecision"><rect x="1057.6" y="24.6" width="10.8" height="9.8" rx="2.4" fill="none" stroke="#828282" stroke-width="1.3"/><rect x="1064" y="26.3" width="2.9" height="6.4" fill="#8c8c8c"/></g>
<path d="M1044.5,24.2 L1049.8,29.5 L1044.5,34.8 L1039.2,29.5 Z" fill="none" stroke="#787878" stroke-width="1" shape-rendering="geometricPrecision"/>
<g shape-rendering="geometricPrecision"><circle cx="95" cy="29" r="6" fill="#7d7d7d"/><path d="M92,28 L95,31 L98,28" fill="none" stroke="#1a1a1a" stroke-width="1.3"/></g>
<g shape-rendering="geometricPrecision"><circle cx="8" cy="394" r="6" fill="#7d7d7d"/><path d="M5,393 L8,396 L11,393" fill="none" stroke="#1a1a1a" stroke-width="1.3"/></g>
<path d="M451,4 L456,9 L451,14" fill="none" stroke="#c0c0c0" stroke-width="1"/>
<rect x="1127" y="29" width="1" height="11" fill="#e6e6e6"/>
<rect x="1125" y="30" width="5" height="1" fill="#e6e6e6"/>
<rect x="1126" y="34" width="4" height="1" fill="#e6e6e6"/>
<rect x="1125" y="38" width="3" height="1" fill="#e6e6e6"/>
<rect x="1129" y="32" width="1" height="6" fill="#e6e6e6"/>
<rect x="1127" y="49" width="1" height="11" fill="#e6e6e6"/>
<rect x="1125" y="50" width="5" height="1" fill="#e6e6e6"/>
<rect x="1126" y="54" width="4" height="1" fill="#e6e6e6"/>
<rect x="1125" y="58" width="3" height="1" fill="#e6e6e6"/>
<rect x="1129" y="52" width="1" height="6" fill="#e6e6e6"/>
<rect x="1127" y="65" width="1" height="11" fill="#e6e6e6"/>
<rect x="1125" y="66" width="5" height="1" fill="#e6e6e6"/>
<rect x="1126" y="70" width="4" height="1" fill="#e6e6e6"/>
<rect x="1125" y="74" width="3" height="1" fill="#e6e6e6"/>
<rect x="1129" y="68" width="1" height="6" fill="#e6e6e6"/>
<rect x="1127" y="81" width="1" height="11" fill="#e6e6e6"/>
<rect x="1125" y="82" width="5" height="1" fill="#e6e6e6"/>
<rect x="1126" y="86" width="4" height="1" fill="#e6e6e6"/>
<rect x="1125" y="90" width="3" height="1" fill="#e6e6e6"/>
<rect x="1129" y="84" width="1" height="6" fill="#e6e6e6"/>
<rect x="1127" y="98" width="1" height="11" fill="#e6e6e6"/>
<rect x="1125" y="99" width="5" height="1" fill="#e6e6e6"/>
<rect x="1126" y="103" width="4" height="1" fill="#e6e6e6"/>
<rect x="1125" y="107" width="3" height="1" fill="#e6e6e6"/>
<rect x="1129" y="101" width="1" height="6" fill="#e6e6e6"/>
<rect x="1127" y="114" width="1" height="11" fill="#e6e6e6"/>
<rect x="1125" y="115" width="5" height="1" fill="#e6e6e6"/>
<rect x="1126" y="119" width="4" height="1" fill="#e6e6e6"/>
<rect x="1125" y="123" width="3" height="1" fill="#e6e6e6"/>
<rect x="1129" y="117" width="1" height="6" fill="#e6e6e6"/>
<rect x="1127" y="130" width="1" height="11" fill="#e6e6e6"/>
<rect x="1125" y="131" width="5" height="1" fill="#e6e6e6"/>
<rect x="1126" y="135" width="4" height="1" fill="#e6e6e6"/>
<rect x="1125" y="139" width="3" height="1" fill="#e6e6e6"/>
<rect x="1129" y="133" width="1" height="6" fill="#e6e6e6"/>
<rect x="1127" y="146" width="1" height="11" fill="#e6e6e6"/>
<rect x="1125" y="147" width="5" height="1" fill="#e6e6e6"/>
<rect x="1126" y="151" width="4" height="1" fill="#e6e6e6"/>
<rect x="1125" y="155" width="3" height="1" fill="#e6e6e6"/>
<rect x="1129" y="149" width="1" height="6" fill="#e6e6e6"/>
<rect x="1127" y="162" width="1" height="11" fill="#e6e6e6"/>
<rect x="1125" y="163" width="5" height="1" fill="#e6e6e6"/>
<rect x="1126" y="167" width="4" height="1" fill="#e6e6e6"/>
<rect x="1125" y="171" width="3" height="1" fill="#e6e6e6"/>
<rect x="1129" y="165" width="1" height="6" fill="#e6e6e6"/>
<rect x="1127" y="178" width="1" height="11" fill="#e6e6e6"/>
<rect x="1125" y="179" width="5" height="1" fill="#e6e6e6"/>
<rect x="1126" y="183" width="4" height="1" fill="#e6e6e6"/>
<rect x="1125" y="187" width="3" height="1" fill="#e6e6e6"/>
<rect x="1129" y="181" width="1" height="6" fill="#e6e6e6"/>
<rect x="1127" y="195" width="1" height="11" fill="#e6e6e6"/>
<rect x="1125" y="196" width="5" height="1" fill="#e6e6e6"/>
<rect x="1126" y="200" width="4" height="1" fill="#e6e6e6"/>
<rect x="1125" y="204" width="3" height="1" fill="#e6e6e6"/>
<rect x="1129" y="198" width="1" height="6" fill="#e6e6e6"/>
<rect x="1127" y="211" width="1" height="11" fill="#e6e6e6"/>
<rect x="1125" y="212" width="5" height="1" fill="#e6e6e6"/>
<rect x="1126" y="216" width="4" height="1" fill="#e6e6e6"/>
<rect x="1125" y="220" width="3" height="1" fill="#e6e6e6"/>
<rect x="1129" y="214" width="1" height="6" fill="#e6e6e6"/>
<rect x="1127" y="227" width="1" height="11" fill="#e6e6e6"/>
<rect x="1125" y="228" width="5" height="1" fill="#e6e6e6"/>
<rect x="1126" y="232" width="4" height="1" fill="#e6e6e6"/>
<rect x="1125" y="236" width="3" height="1" fill="#e6e6e6"/>
<rect x="1129" y="230" width="1" height="6" fill="#e6e6e6"/>
<rect x="1127" y="242" width="1" height="11" fill="#e6e6e6"/>
<rect x="1125" y="243" width="5" height="1" fill="#e6e6e6"/>
<rect x="1126" y="247" width="4" height="1" fill="#e6e6e6"/>
<rect x="1125" y="251" width="3" height="1" fill="#e6e6e6"/>
<rect x="1129" y="245" width="1" height="6" fill="#e6e6e6"/>
<rect x="1127" y="258" width="1" height="11" fill="#e6e6e6"/>
<rect x="1125" y="259" width="5" height="1" fill="#e6e6e6"/>
<rect x="1126" y="263" width="4" height="1" fill="#e6e6e6"/>
<rect x="1125" y="267" width="3" height="1" fill="#e6e6e6"/>
<rect x="1129" y="261" width="1" height="6" fill="#e6e6e6"/>
<rect x="1127" y="274" width="1" height="11" fill="#e6e6e6"/>
<rect x="1125" y="275" width="5" height="1" fill="#e6e6e6"/>
<rect x="1126" y="279" width="4" height="1" fill="#e6e6e6"/>
<rect x="1125" y="283" width="3" height="1" fill="#e6e6e6"/>
<rect x="1129" y="277" width="1" height="6" fill="#e6e6e6"/>
<rect x="1127" y="291" width="1" height="11" fill="#e6e6e6"/>
<rect x="1125" y="292" width="5" height="1" fill="#e6e6e6"/>
<rect x="1126" y="296" width="4" height="1" fill="#e6e6e6"/>
<rect x="1125" y="300" width="3" height="1" fill="#e6e6e6"/>
<rect x="1129" y="294" width="1" height="6" fill="#e6e6e6"/>
<rect x="1127" y="307" width="1" height="11" fill="#e6e6e6"/>
<rect x="1125" y="308" width="5" height="1" fill="#e6e6e6"/>
<rect x="1126" y="312" width="4" height="1" fill="#e6e6e6"/>
<rect x="1125" y="316" width="3" height="1" fill="#e6e6e6"/>
<rect x="1129" y="310" width="1" height="6" fill="#e6e6e6"/>
<rect x="1127" y="323" width="1" height="11" fill="#e6e6e6"/>
<rect x="1125" y="324" width="5" height="1" fill="#e6e6e6"/>
<rect x="1126" y="328" width="4" height="1" fill="#e6e6e6"/>
<rect x="1125" y="332" width="3" height="1" fill="#e6e6e6"/>
<rect x="1129" y="326" width="1" height="6" fill="#e6e6e6"/>
<rect x="1127" y="340" width="1" height="11" fill="#e6e6e6"/>
<rect x="1125" y="341" width="5" height="1" fill="#e6e6e6"/>
<rect x="1126" y="345" width="4" height="1" fill="#e6e6e6"/>
<rect x="1125" y="349" width="3" height="1" fill="#e6e6e6"/>
<rect x="1129" y="343" width="1" height="6" fill="#e6e6e6"/>
<rect x="1127" y="357" width="1" height="11" fill="#e6e6e6"/>
<rect x="1125" y="358" width="5" height="1" fill="#e6e6e6"/>
<rect x="1126" y="362" width="4" height="1" fill="#e6e6e6"/>
<rect x="1125" y="366" width="3" height="1" fill="#e6e6e6"/>
<rect x="1129" y="360" width="1" height="6" fill="#e6e6e6"/>
<rect x="1127" y="374" width="1" height="11" fill="#e6e6e6"/>
<rect x="1125" y="375" width="5" height="1" fill="#e6e6e6"/>
<rect x="1126" y="379" width="4" height="1" fill="#e6e6e6"/>
<rect x="1125" y="383" width="3" height="1" fill="#e6e6e6"/>
<rect x="1129" y="377" width="1" height="6" fill="#e6e6e6"/>
<rect x="1127" y="402" width="1" height="11" fill="#e6e600"/>
<rect x="1125" y="403" width="5" height="1" fill="#e6e600"/>
<rect x="1126" y="407" width="4" height="1" fill="#e6e600"/>
<rect x="1125" y="411" width="3" height="1" fill="#e6e600"/>
<rect x="1129" y="405" width="1" height="6" fill="#e6e600"/>
<rect x="1127" y="422" width="1" height="11" fill="#e6e6e6"/>
<rect x="1125" y="423" width="5" height="1" fill="#e6e6e6"/>
<rect x="1126" y="427" width="4" height="1" fill="#e6e6e6"/>
<rect x="1125" y="431" width="3" height="1" fill="#e6e6e6"/>
<rect x="1129" y="425" width="1" height="6" fill="#e6e6e6"/>
<rect x="1127" y="442" width="3" height="10" fill="#d2d2d2"/>
<rect x="1126" y="443" width="1" height="2" fill="#d2d2d2"/>
<rect x="1127" y="460" width="3" height="10" fill="#d2d2d2"/>
<rect x="1126" y="461" width="1" height="2" fill="#d2d2d2"/>
<rect x="1127" y="479" width="3" height="10" fill="#d2d2d2"/>
<rect x="1126" y="480" width="1" height="2" fill="#d2d2d2"/>
<rect x="1127" y="497" width="3" height="10" fill="#d2d2d2"/>
<rect x="1126" y="498" width="1" height="2" fill="#d2d2d2"/>
<rect x="1127" y="515" width="3" height="10" fill="#d2d2d2"/>
<rect x="1126" y="516" width="1" height="2" fill="#d2d2d2"/>
<rect x="1127" y="534" width="3" height="10" fill="#d2d2d2"/>
<rect x="1126" y="535" width="1" height="2" fill="#d2d2d2"/>
<rect x="1127" y="552" width="3" height="10" fill="#d2d2d2"/>
<rect x="1126" y="553" width="1" height="2" fill="#d2d2d2"/>
<rect x="1127" y="570" width="3" height="10" fill="#d2d2d2"/>
<rect x="1126" y="571" width="1" height="2" fill="#d2d2d2"/>
<rect x="1127" y="588" width="3" height="10" fill="#d2d2d2"/>
<rect x="1126" y="589" width="1" height="2" fill="#d2d2d2"/>
<rect x="8" y="649" width="1" height="1" fill="#e6e6e6"/>
<rect x="11" y="649" width="1" height="1" fill="#e6e6e6"/>
<rect x="16" y="649" width="1" height="1" fill="#e6e6e6"/>
<rect x="19" y="649" width="1" height="1" fill="#e6e6e6"/>
<rect x="51" y="649" width="1" height="1" fill="#e6e6e6"/>
<rect x="828" y="649" width="1" height="1" fill="#e6e6e6"/>
<rect x="844" y="648" width="2" height="2" fill="#54ffff"/>
<rect x="848" y="648" width="4" height="2" fill="#54ffff"/>
<rect x="857" y="648" width="9" height="2" fill="#54ffff"/>
</svg>
<div class="t" style="left:28px;top:2px;color:#c8c8c8;font-size:12px;">分时</div>
<div class="t" style="left:62px;top:2px;color:#c8c8c8;font-size:12px;">1分钟</div>
<div class="t" style="left:100px;top:2px;color:#c8c8c8;font-size:12px;">5分钟</div>
<div class="t" style="left:139px;top:2px;color:#c8c8c8;font-size:12px;">15分钟</div>
<div class="t" style="left:185px;top:2px;color:#c8c8c8;font-size:12px;">30分钟</div>
<div class="t" style="left:231px;top:2px;color:#c8c8c8;font-size:12px;">60分钟</div>
<div class="t" style="left:278px;top:2px;color:#54ffff;font-size:12px;">日线</div>
<div class="t" style="left:312px;top:2px;color:#c8c8c8;font-size:12px;">周线</div>
<div class="t" style="left:346px;top:2px;color:#c8c8c8;font-size:12px;">月线</div>
<div class="t" style="left:378px;top:2px;color:#c8c8c8;font-size:12px;">多周期</div>
<div class="t" style="left:423px;top:2px;color:#c8c8c8;font-size:12px;">更多</div>
<div class="t" style="left:813px;top:2px;color:#c8c8c8;font-size:12px;">复权</div>
<div class="t" style="left:847px;top:2px;color:#c8c8c8;font-size:12px;">叠加</div>
<div class="t" style="left:882px;top:2px;color:#c8c8c8;font-size:12px;">多股</div>
<div class="t" style="left:917px;top:2px;color:#c8c8c8;font-size:12px;">统计</div>
<div class="t" style="left:952px;top:2px;color:#c8c8c8;font-size:12px;">画线</div>
<div class="t" style="left:988px;top:2px;color:#c8c8c8;font-size:12px;">F10</div>
<div class="t" style="left:1022px;top:2px;color:#c8c8c8;font-size:12px;">标记</div>
<div class="t" style="left:1054px;top:2px;color:#c8c8c8;font-size:12px;">+自选</div>
<div class="t" style="left:1092px;top:2px;color:#c8c8c8;font-size:12px;">返回</div>
<div class="t" style="left:3px;top:22px;color:#c8c8c8;font-size:12px;">福建高速(日线)</div>
<div class="t" style="left:453.5px;top:39px;color:#c8c8c8;font-size:12px;letter-spacing:-0.5px">5.01</div>
<div class="t" style="left:120.5px;top:361px;color:#c8c8c8;font-size:12px;letter-spacing:-0.3px">3.34</div>
<div class="t" style="right:12.599999999999909px;top:36px;color:#ff3232;font-size:12px;">5.00</div>
<div class="t" style="right:12.599999999999909px;top:75px;color:#ff3232;font-size:12px;">4.80</div>
<div class="t" style="right:12.599999999999909px;top:114px;color:#ff3232;font-size:12px;">4.60</div>
<div class="t" style="right:12.599999999999909px;top:153px;color:#ff3232;font-size:12px;">4.40</div>
<div class="t" style="right:12.599999999999909px;top:192px;color:#ff3232;font-size:12px;">4.20</div>
<div class="t" style="right:12.599999999999909px;top:231px;color:#ff3232;font-size:12px;">4.00</div>
<div class="t" style="right:12.599999999999909px;top:271px;color:#ff3232;font-size:12px;">3.80</div>
<div class="t" style="right:12.599999999999909px;top:310px;color:#ff3232;font-size:12px;">3.60</div>
<div class="t" style="right:12.599999999999909px;top:349px;color:#ff3232;font-size:12px;">3.40</div>
<div class="t" style="right:12.599999999999909px;top:399px;color:#ff3232;font-size:12px;">90.00</div>
<div class="t" style="right:12.599999999999909px;top:437px;color:#ff3232;font-size:12px;">75.00</div>
<div class="t" style="right:12.599999999999909px;top:475px;color:#ff3232;font-size:12px;">60.00</div>
<div class="t" style="right:12.599999999999909px;top:514px;color:#ff3232;font-size:12px;">45.00</div>
<div class="t" style="right:12.599999999999909px;top:552px;color:#ff3232;font-size:12px;">30.00</div>
<div class="t" style="right:12.599999999999909px;top:590px;color:#ff3232;font-size:12px;">15.00</div>
<div class="t" style="left:18px;top:387px;color:#c8c8c8;font-size:12px;">股朋指标网</div>
<div class="t" style="left:83px;top:387px;color:#e6e6e6;font-size:12px;">N: 30.00</div>
<div class="t" style="left:134px;top:387px;color:#ff0000;font-size:12px;">VAR11: 53.58</div>
<div class="t" style="left:213px;top:387px;color:#0000ff;font-size:12px;">VAR12: 57.78</div>
<div class="t" style="left:292px;top:387px;color:#00e600;font-size:12px;">: 60.00</div>
<div class="t" style="left:334px;top:387px;color:#00e600;font-size:12px;">顶背: -</div>
<div class="t" style="left:372px;top:387px;color:#ff0000;font-size:12px;">底背: -</div>
<div class="t" style="left:412px;top:387px;color:#e6e6e6;font-size:12px;">: 20.00</div>
<div class="t" style="left:454px;top:387px;color:#e6e600;font-size:12px;">: 10.00</div>
<div class="t" style="left:496px;top:387px;color:#e600e6;font-size:12px;">: 20.00</div>
<div class="t" style="left:539px;top:387px;color:#4169e1;font-size:12px;">: 90.00</div>
<div class="t" style="left:580px;top:387px;color:#c8c8c8;font-size:12px;">: 80.00</div>
<div class="m" style="left:233px;top:371px;width:13px;background:#003c82">财</div>
<div class="m" style="left:395px;top:371px;background:#8c0000">涨</div>
<div class="m" style="left:407px;top:371px;width:13px;background:#96500a">榜</div>
<div class="t" style="left:553.6px;top:372.5px;color:#ff0000;font-size:10px;font-weight:bold">S</div>
<div class="t" style="left:343px;top:451px;color:#0000ff;font-size:12px;">顶</div>
<div class="t" style="left:151px;top:568px;color:#0000ff;font-size:12px;">底</div>
<div class="t" style="left:810px;top:601px;color:#0000ff;font-size:12px;">底</div>
<div class="t" style="left:950px;top:535px;color:#0000ff;font-size:12px;">底</div>
<div class="t" style="left:0.5px;top:615px;color:#808080;font-size:12px;">用到未来数据</div>
<div class="t" style="left:3px;top:632px;color:#ff3232;font-size:12px;">2025年</div>
<div class="t" style="left:121.5px;top:632px;color:#ff3232;font-size:12px;">10</div>
<div class="t" style="left:247.5px;top:632px;color:#ff3232;font-size:12px;">11</div>
<div class="t" style="left:395.5px;top:632px;color:#ff3232;font-size:12px;">12</div>
<div class="t" style="left:565px;top:632px;color:#ff3232;font-size:12px;">1</div>
<div class="t" style="left:713px;top:632px;color:#ff3232;font-size:12px;">2</div>
<div class="t" style="left:816px;top:632px;color:#ff3232;font-size:12px;">3</div>
<div id="wm"><div class="w1">指标公式网</div><div class="w2">www.zbgs3.com</div></div>
</body></html>
